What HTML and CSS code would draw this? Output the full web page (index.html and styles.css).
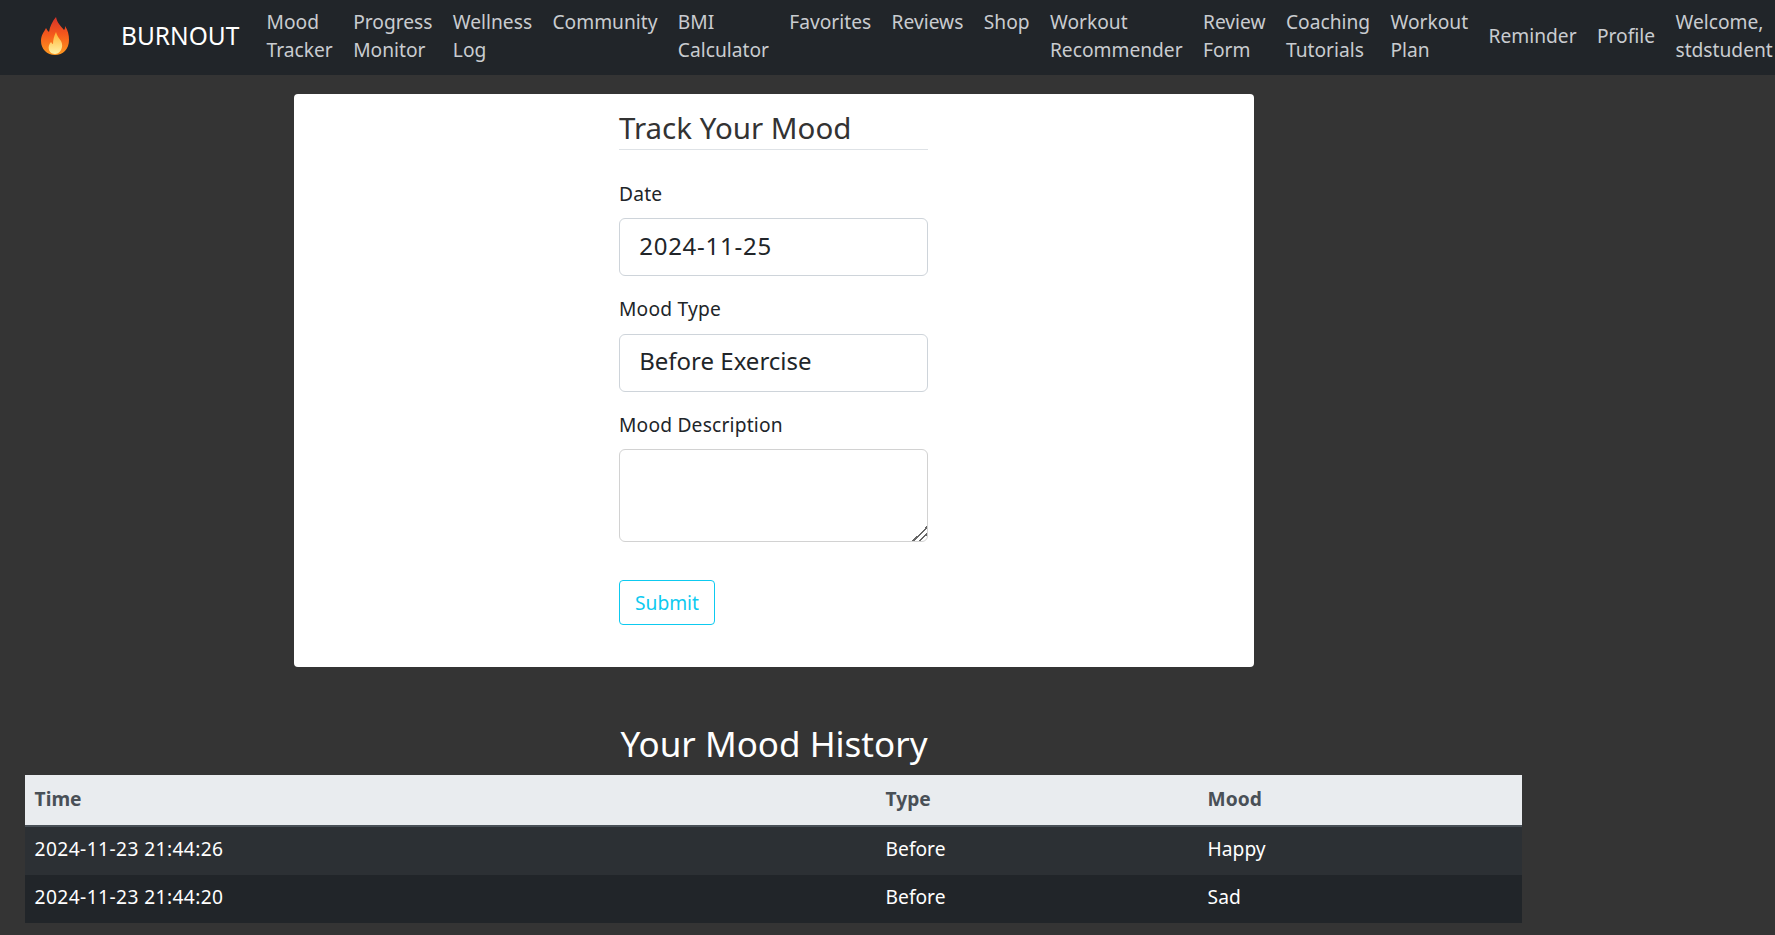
FILE: index.html
```html
<!DOCTYPE html>
<html lang="en">
<head>
  <meta charset="UTF-8" />
  <meta name="viewport" content="width=device-width, initial-scale=1" />
  <title>Mood Tracker – Burnout</title>
  <link rel="stylesheet" href="styles.css">
</head>
<body>

  <nav class="navbar">
    <a class="logo" href="#">
      <svg width="28" height="38" viewBox="0 0 28 38" aria-hidden="true">
        <defs>
          <linearGradient id="flameOuter" x1="0" y1="0" x2="0" y2="1">
            <stop offset="0" stop-color="#d8322a" />
            <stop offset="0.45" stop-color="#f4581c" />
            <stop offset="1" stop-color="#ff9a1f" />
          </linearGradient>
          <linearGradient id="flameInner" x1="0" y1="0" x2="0" y2="1">
            <stop offset="0" stop-color="#ffb02e" />
            <stop offset="1" stop-color="#fff2a8" />
          </linearGradient>
        </defs>
        <path fill="url(#flameOuter)" d="M15 0c1 6 5 9 8 13 1-1 1-2 1-4 3 4 4 9 4 14 0 9-6 15-14 15S0 32 0 24c0-6 3-9 5-13 1 2 2 3 3 4 1-6 3-10 7-15z" />
        <path fill="url(#flameInner)" d="M15 15c1 4 3 6 5 9 2 4 1 7 0 9-2 3-4 4-6 4s-5-1-6-4c-1-3 0-6 2-8 1 1 1 2 2 2 0-4 1-8 3-12z" />
      </svg>
    </a>
    <a class="brand" href="#">BURNOUT</a>
    <ul class="nav-links">
      <li><a href="#">Mood<br>Tracker</a></li>
      <li><a href="#">Progress<br>Monitor</a></li>
      <li><a href="#">Wellness<br>Log</a></li>
      <li class="top"><a href="#">Community</a></li>
      <li><a href="#">BMI<br>Calculator</a></li>
      <li class="top"><a href="#">Favorites</a></li>
      <li class="top"><a href="#">Reviews</a></li>
      <li class="top"><a href="#">Shop</a></li>
      <li><a href="#">Workout<br>Recommender</a></li>
      <li><a href="#">Review<br>Form</a></li>
      <li><a href="#">Coaching<br>Tutorials</a></li>
      <li><a href="#">Workout<br>Plan</a></li>
      <li><a href="#">Reminder</a></li>
      <li><a href="#">Profile</a></li>
      <li><a href="#">Welcome,<br>stdstudent</a></li>
    </ul>
  </nav>

  <main class="page">
    <section class="card">
      <form class="mood-form">
        <h4 class="form-title">Track Your Mood</h4>

        <label for="date">Date</label>
        <input class="field date" type="text" id="date" value="2024-11-25" />

        <label for="type">Mood Type</label>
        <select class="field" id="type">
          <option>Before Exercise</option>
          <option>After Exercise</option>
        </select>

        <label for="desc">Mood Description</label>
        <textarea class="field area" id="desc"></textarea>

        <button class="submit" type="button">Submit</button>
      </form>
    </section>

    <h2 class="history-title">Your Mood History</h2>
    <table class="history">
      <thead>
        <tr>
          <th class="col-time">Time</th>
          <th class="col-type">Type</th>
          <th>Mood</th>
        </tr>
      </thead>
      <tbody>
        <tr class="odd">
          <td class="time">2024-11-23 21:44:26</td>
          <td>Before</td>
          <td>Happy</td>
        </tr>
        <tr>
          <td class="time">2024-11-23 21:44:20</td>
          <td>Before</td>
          <td>Sad</td>
        </tr>
      </tbody>
    </table>
  </main>

</body>
</html>
```

FILE: styles.css
```css
:root {
  --nav-dark: #212529;
  --link: #c9ccd0;
  --bg: #343434;
}

* {
  box-sizing: border-box;
}

body {
  margin: 0;
  font-family: 'Noto Sans', sans-serif;
  font-size: 19.2px;
  line-height: 1.5;
  color: #212529;
  background: var(--bg);
  overflow-x: hidden;
}

a {
  text-decoration: none;
}

/* Navbar */
.navbar {
  display: flex;
  align-items: center;
  height: 75px;
  padding: 0 0 3px 41px;
  background: var(--nav-dark);
  white-space: nowrap;
}

.logo {
  display: flex;
  margin-right: 52px;
}

.brand {
  color: #fff;
  font-size: 24.5px;
  margin-right: 17px;
}

.nav-links {
  display: flex;
  align-items: center;
  list-style: none;
  margin: 0;
  padding: 0;
}

.nav-links a {
  display: block;
  padding: 0 10.2px;
  color: var(--link);
  line-height: 28.5px;
}

.nav-links .top {
  align-self: flex-start;
}

/* Form card */
.page {
  display: flex;
  flex-direction: column;
  align-items: center;
  width: 1548px;
  padding-bottom: 12px;
}

.card {
  width: 960px;
  margin-top: 19px;
  padding: 17px 0 42px;
  background: #fff;
  border-radius: 4px;
}

.mood-form {
  display: flex;
  flex-direction: column;
  align-items: flex-start;
  width: 308.5px;
  margin-left: 325px;
}

.form-title {
  width: 100%;
  margin: 0 0 30.5px;
  padding-bottom: 3px;
  font-size: 29.5px;
  font-weight: 400;
  line-height: 34.5px;
  color: #333;
  border-bottom: 1px solid #dee2e6;
}

label {
  margin-bottom: 9.6px;
  letter-spacing: 0.2px;
}

.field {
  width: 100%;
  height: 58px;
  margin-bottom: 19px;
  padding: 8px 19.2px 11px;
  font-family: inherit;
  font-size: 24px;
  line-height: 1.5;
  color: #212529;
  background: #fff;
  border: 1px solid #ced4da;
  border-radius: 6px;
  appearance: none;
}

.date {
  letter-spacing: 0.75px;
}

.area {
  display: block;
  height: 93px;
  margin-bottom: 38px;
  border-color: #d2d2d2;
}

.area::-webkit-resizer {
  background: linear-gradient(135deg, transparent 50%, #666 50%, #666 58%, transparent 58%, transparent 72%, #666 72%, #666 80%, transparent 80%);
}

.submit {
  width: 96px;
  height: 45px;
  padding: 0;
  font-family: inherit;
  font-size: 19.2px;
  color: #0dcaf0;
  background: transparent;
  border: 1px solid #0dcaf0;
  border-radius: 4px;
}

/* History table */
.history-title {
  margin: 54px 0 8px;
  font-size: 35px;
  font-weight: 400;
  line-height: 46px;
  color: #fff;
}

.history {
  align-self: flex-start;
  width: 1497px;
  margin-left: 25px;
  border-collapse: collapse;
  color: #fff;
  background: var(--nav-dark);
}

.history th,
.history td {
  padding: 7.6px 9.6px 11.6px;
  text-align: left;
}

.history th {
  height: 51px;
  padding: 8.6px 9.6px 10.6px;
  color: #495057;
  background: #e9ecef;
  border-bottom: 2px solid #495057;
}

.col-time {
  width: 851px;
}

.col-type {
  width: 322px;
}

.odd {
  background: #2c3034;
}

.odd td {
  height: 49px;
}

.time {
  letter-spacing: 0.4px;
}
```
